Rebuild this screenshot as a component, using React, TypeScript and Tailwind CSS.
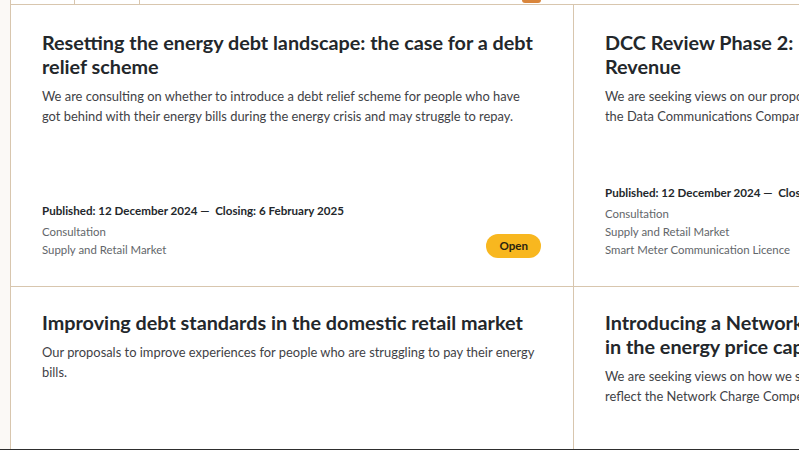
import React from 'react';

interface Consultation {
    title: string[];
    summary: string[];
    published?: string;
    closing?: string;
    tags?: string[];
    open?: boolean;
}

// Lines are given explicitly so the cards cut off at the right edge wrap like the live page
const rows: Consultation[][] = [
    [
        {
            title: ['Resetting the energy debt landscape: the case for a debt relief scheme'],
            summary: [
                'We are consulting on whether to introduce a debt relief scheme for people who have got behind with their energy bills during the energy crisis and may struggle to repay.',
            ],
            published: '12 December 2024',
            closing: '6 February 2025',
            tags: ['Consultation', 'Supply and Retail Market'],
            open: true,
        },
        {
            title: ['DCC Review Phase 2:  Proposed Approach to Baseline', 'Revenue'],
            summary: [
                'We are seeking views on our proposed approach to the baseline revenue of',
                'the Data Communications Company (DCC) for the next licence term.',
            ],
            published: '12 December 2024',
            closing: '6 February 2025',
            tags: ['Consultation', 'Supply and Retail Market', 'Smart Meter Communication Licence'],
            open: true,
        },
    ],
    [
        {
            title: ['Improving debt standards in the domestic retail market'],
            summary: ['Our proposals to improve experiences for people who are struggling to pay their energy bills.'],
        },
        {
            title: ['Introducing a Network Charge Compensation allowance', 'in the energy price cap'],
            summary: [
                'We are seeking views on how we should update the price cap methodology to',
                'reflect the Network Charge Compensation scheme.',
            ],
        },
    ],
];

function Lines({ lines }: { lines: string[] }) {
    if (lines.length === 1) return <>{lines[0]}</>;
    return (
        <>
            {lines.map(l => (
                <span key={l} className="block whitespace-pre">
                    {l}
                </span>
            ))}
        </>
    );
}

function Card({ item, first, top }: { item: Consultation; first: boolean; top: string }) {
    return (
        <div
            className={`flex flex-col w-[562px] shrink-0 pl-[31px] pr-[32px] pb-[27px] bg-white ${top} ${
                first ? '' : 'border-l border-[#d8c6ae]'
            }`}
        >
            <h3 className="text-[19.8px] leading-[24px] font-bold text-[#23272b]">
                <Lines lines={item.title} />
            </h3>
            <p className="mt-[8px] text-[12.9px] leading-[20px] text-[#3f4246]">
                <Lines lines={item.summary} />
            </p>
            {item.published && (
                <div className="mt-auto flex items-end justify-between pt-[20px]">
                    <div>
                        <p className="text-[11.6px] leading-[18px] font-bold text-[#23272b] whitespace-nowrap">
                            Published: {item.published} —&nbsp; Closing: {item.closing}
                        </p>
                        <ul className="mt-[3px] text-[11.4px] leading-[18px] text-[#62666a] whitespace-nowrap">
                            {item.tags?.map(tag => (
                                <li key={tag}>{tag}</li>
                            ))}
                        </ul>
                    </div>
                    {item.open && (
                        <span className="mb-[1px] px-[13px] h-[24px] flex items-center rounded-full bg-[#f8b71f] text-[11.6px] font-bold text-[#2b2410]">
                            Open
                        </span>
                    )}
                </div>
            )}
        </div>
    );
}

export default function App() {
    return (
        <div
            className="w-[799px] h-[450px] overflow-hidden bg-[#fbf9f6] border-b border-[#2e2e2e]"
            style={{ fontFamily: 'Lato, "Open Sans", "Liberation Sans", sans-serif' }}
        >
            <div className="ml-[10px] w-[1200px] border-l border-[#d8c6ae]">
                {/* Filter tabs strip (cut off above) */}
                <div className="flex h-[5px] border-b border-[#d8c6ae] bg-white">
                    <div className="w-[64px] border-r border-[#d8c6ae]" />
                    <div className="w-[65px] border-r border-[#d8c6ae]" />
                    <div className="w-[382px]" />
                    <div className="w-[19px] h-[3px] bg-[#d9853b] rounded-b-sm" />
                </div>

                {rows.map((row, i) => (
                    <div
                        key={i}
                        className={`flex ${i > 0 ? 'border-t border-[#d8c6ae] h-[163px]' : 'h-[281px]'}`}
                    >
                        {row.map((item, j) => (
                            <Card
                                key={item.title[0]}
                                item={item}
                                first={j === 0}
                                top={i === 0 ? 'pt-[25px]' : 'pt-[23px]'}
                            />
                        ))}
                    </div>
                ))}
            </div>
        </div>
    );
}
